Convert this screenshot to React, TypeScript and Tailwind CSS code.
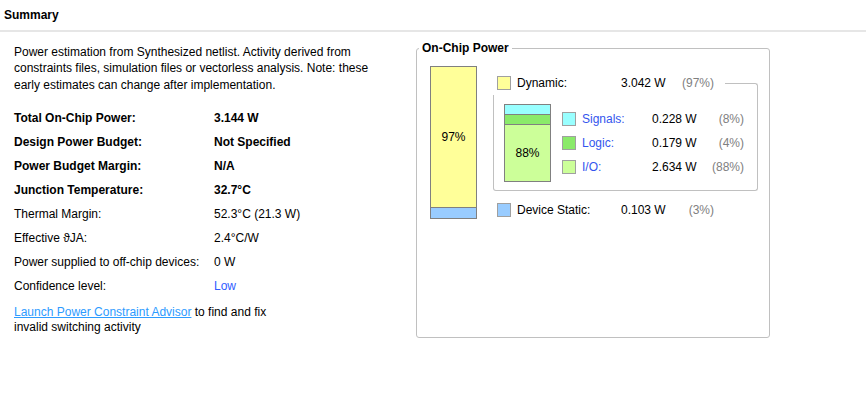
import React from 'react';

interface Part {
  label: string;
  value: string;
  pct: string;
  color: string;
}

const inner: Part[] = [
  { label: 'Signals:', value: '0.228 W', pct: '(8%)', color: 'bg-[#99ffff]' },
  { label: 'Logic:', value: '0.179 W', pct: '(4%)', color: 'bg-[#8aea6a]' },
  { label: 'I/O:', value: '2.634 W', pct: '(88%)', color: 'bg-[#ccff99]' },
];

const rows: { label: string; value: string; bold?: boolean; link?: boolean }[] = [
  { label: 'Total On-Chip Power:', value: '3.144 W', bold: true },
  { label: 'Design Power Budget:', value: 'Not Specified', bold: true },
  { label: 'Power Budget Margin:', value: 'N/A', bold: true },
  { label: 'Junction Temperature:', value: '32.7°C', bold: true },
  { label: 'Thermal Margin:', value: '52.3°C (21.3 W)' },
  { label: 'Effective \u03D1JA:', value: '2.4°C/W' },
  { label: 'Power supplied to off-chip devices:', value: '0 W' },
  { label: 'Confidence level:', value: 'Low', link: true },
];

const Swatch = ({ color }: { color: string }) => (
  <div className={`w-[14px] h-[14px] border border-[#a0a0a0] shrink-0 ${color}`} />
);

// top-level row: Dynamic / Device Static
const TopRow = ({ label, value, pct, color }: Part) => (
  <div className="flex items-center h-[14px] pl-[4px]">
    <Swatch color={color} />
    <span className="w-[110px] pl-[6px]">{label}</span>
    <span className="w-[60px]">{value}</span>
    <span className="w-[33px] text-right text-[#808080]">{pct}</span>
  </div>
);

export default function App() {
  return (
    <div className="w-[866px] h-[417px] bg-white text-[12px] text-black font-['Liberation_Sans',Arial,sans-serif]">
      {/* header */}
      <div className="h-[30px] flex items-center px-[4px] font-bold">Summary</div>
      <div className="h-[2px] bg-[#e6e6e6]" />

      <div className="flex">
        {/* left column */}
        <div className="w-[416px] pl-[14px] pt-[12px]">
          <p className="leading-[16.3px]">
            Power estimation from Synthesized netlist. Activity derived from
            <br />
            constraints files, simulation files or vectorless analysis. Note: these
            <br />
            early estimates can change after implementation.
          </p>
          <div className="mt-[13px]">
            {rows.map((r) => (
              <div key={r.label} className={`flex items-center h-[24px] ${r.bold ? 'font-bold' : ''}`}>
                <span className="w-[200px]">{r.label}</span>
                <span className={r.link ? 'text-[#2f5cff]' : ''}>{r.value}</span>
              </div>
            ))}
          </div>
          <p className="mt-[7px] leading-[15.5px]">
            <span className="text-[#2d9bff] underline">Launch Power Constraint Advisor</span> to find and fix
            <br />
            invalid switching activity
          </p>
        </div>

        {/* On-Chip Power */}
        <fieldset className="mt-[9px] w-[354px] h-[297px] border border-[#c0c0c0] rounded-[3px]">
          <legend className="ml-[2px] px-[3px] font-bold leading-[14px]">On-Chip Power</legend>
          <div className="flex items-start pt-[11px] pl-[13px]">
            {/* total stacked bar */}
            <div className="w-[47px] h-[153px] border border-[#808080] flex flex-col shrink-0">
              <div className="flex-1 bg-[#ffff99] flex items-center justify-center">97%</div>
              <div className="h-[11px] border-t border-[#808080] bg-[#99ccff]" />
            </div>

            <div className="ml-[16px] w-[265px] mt-[10px]">
              <div className="flex items-start h-[19px]">
                <TopRow label="Dynamic:" value="3.042 W" pct="(97%)" color="bg-[#ffff99]" />
                <div className="flex-1 self-stretch mt-[7px] ml-[11px] border-t border-r border-[#c0c0c0] rounded-tr-[3px]" />
              </div>
              <div className="flex items-start border-l border-r border-b border-[#c0c0c0] rounded-b-[3px] pl-[10px] pt-[9px] pb-[8px]">
                <div className="w-[47px] h-[78px] border border-[#808080] flex flex-col shrink-0">
                  <div className="h-[10px] border-b border-[#808080] bg-[#99ffff]" />
                  <div className="h-[10px] border-b border-[#808080] bg-[#8aea6a]" />
                  <div className="flex-1 bg-[#ccff99] flex items-center justify-center">88%</div>
                </div>
                <div className="ml-[11px] mt-[3px] flex flex-col">
                  {inner.map((p) => (
                    <div key={p.label} className="flex items-center h-[24px]">
                      <Swatch color={p.color} />
                      <span className="w-[76px] pl-[6px] text-[#3355ee]">{p.label}</span>
                      <span className="w-[60px]">{p.value}</span>
                      <span className="w-[32px] text-right text-[#808080]">{p.pct}</span>
                    </div>
                  ))}
                </div>
              </div>
              <div className="mt-[12px]">
                <TopRow label="Device Static:" value="0.103 W" pct="(3%)" color="bg-[#99ccff]" />
              </div>
            </div>
          </div>
        </fieldset>
      </div>
    </div>
  );
}
